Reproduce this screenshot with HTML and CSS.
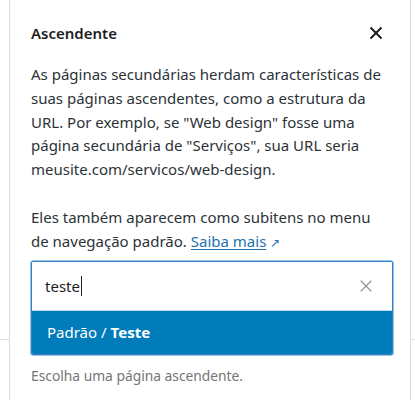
FILE: index.html
```html
<!DOCTYPE html>
<html lang="pt-BR">
<head>
<meta charset="utf-8">
<link rel="stylesheet" href="styles.css">
</head>
<body>
<div class="panel">
  <div class="header">
    <h2 class="title">Ascendente</h2>
    <button class="close" aria-label="Fechar">
      <svg width="24" height="24" viewBox="0 0 24 24"><path d="M6.5 6.5 17.5 17.5M17.5 6.5 6.5 17.5" stroke="#1e1e1e" stroke-width="2" fill="none"/></svg>
    </button>
  </div>
  <p class="text"><span class="line">As páginas secundárias herdam características de</span><span class="line">suas páginas ascendentes, como a estrutura da</span><span class="line">URL. Por exemplo, se "Web design" fosse uma</span><span class="line">página secundária de "Serviços", sua URL seria</span><span class="line">meusite.com/servicos/web-design.</span></p>
  <p class="text"><span class="line">Eles também aparecem como subitens no menu</span><span class="line">de navegação padrão. <a class="link" href="#">Saiba mais</a> <span class="ext">↗</span></span></p>
  <div class="combo">
    <div class="field">
      <span class="value">teste</span><span class="caret"></span>
      <svg class="clear" width="16" height="16" viewBox="0 0 16 16"><path d="M2 2 14 14M14 2 2 14" stroke="#949494" stroke-width="1.5" fill="none"/></svg>
    </div>
    <div class="option">Padrão / <strong>Teste</strong></div>
  </div>
  <p class="help">Escolha uma página ascendente.</p>
</div>
</body>
</html>
```
FILE: styles.css
```css
html, body {
  margin: 0;
  padding: 0;
  background: #fff;
}
body {
  height: 400px;
  overflow: hidden;
  background: linear-gradient(to bottom, transparent 339px, #e0e0e0 339px, #e0e0e0 340px, transparent 340px);
  font-family: "Noto Sans", "Open Sans", sans-serif;
  color: #1e1e1e;
}
.panel {
  margin-left: 9px;
  width: 402px;
  height: 400px;
  box-sizing: border-box;
  border-left: 1px solid #dcdcde;
  border-right: 1px solid #dcdcde;
  background: #fff;
  padding: 21px 20px 0 21px;
}
.header {
  display: flex;
  align-items: center;
  justify-content: space-between;
  height: 24px;
}
.title {
  margin: 0;
  font-size: 15px;
  font-weight: 600;
  line-height: 24px;
  color: #1e1e1e;
}
.close {
  border: 0;
  background: none;
  padding: 0;
  margin-right: 2px;
  width: 24px;
  height: 24px;
  display: flex;
}
.text {
  margin: 18px 0 0;
  font-size: 15px;
  line-height: 23.8px;
  color: #2c3338;
}
.line {
  display: block;
  white-space: nowrap;
}
.text + .text {
  margin-top: 24px;
}
.link {
  color: #2271b1;
  text-decoration: underline;
  text-underline-offset: 2px;
}
.ext {
  font-size: 12px;
  color: #2271b1;
}
.combo {
  margin-top: 6px;
  width: 360px;
  border: 1px solid #3582c4;
  border-radius: 2px;
  box-shadow: 0 0 0 0.5px #3582c4;
  overflow: hidden;
}
.field {
  display: flex;
  align-items: center;
  height: 48px;
  padding: 0 19px 0 13px;
  font-size: 15px;
  border-bottom: 1px solid #c3d9ea;
}
.value {
  color: #1e1e1e;
}
.caret {
  width: 1px;
  height: 20px;
  background: #1e1e1e;
  margin-left: 1px;
}
.clear {
  margin-left: auto;
  width: 14px;
  height: 14px;
}
.option {
  height: 43px;
  display: flex;
  align-items: center;
  padding-left: 15px;
  background: #007cba;
  color: #fff;
  font-size: 15px;
}
.option strong {
  font-weight: 700;
  margin-left: 4px;
}
.help {
  margin: 11px 0 0;
  font-size: 13.8px;
  line-height: 20px;
  color: #757575;
}
```
